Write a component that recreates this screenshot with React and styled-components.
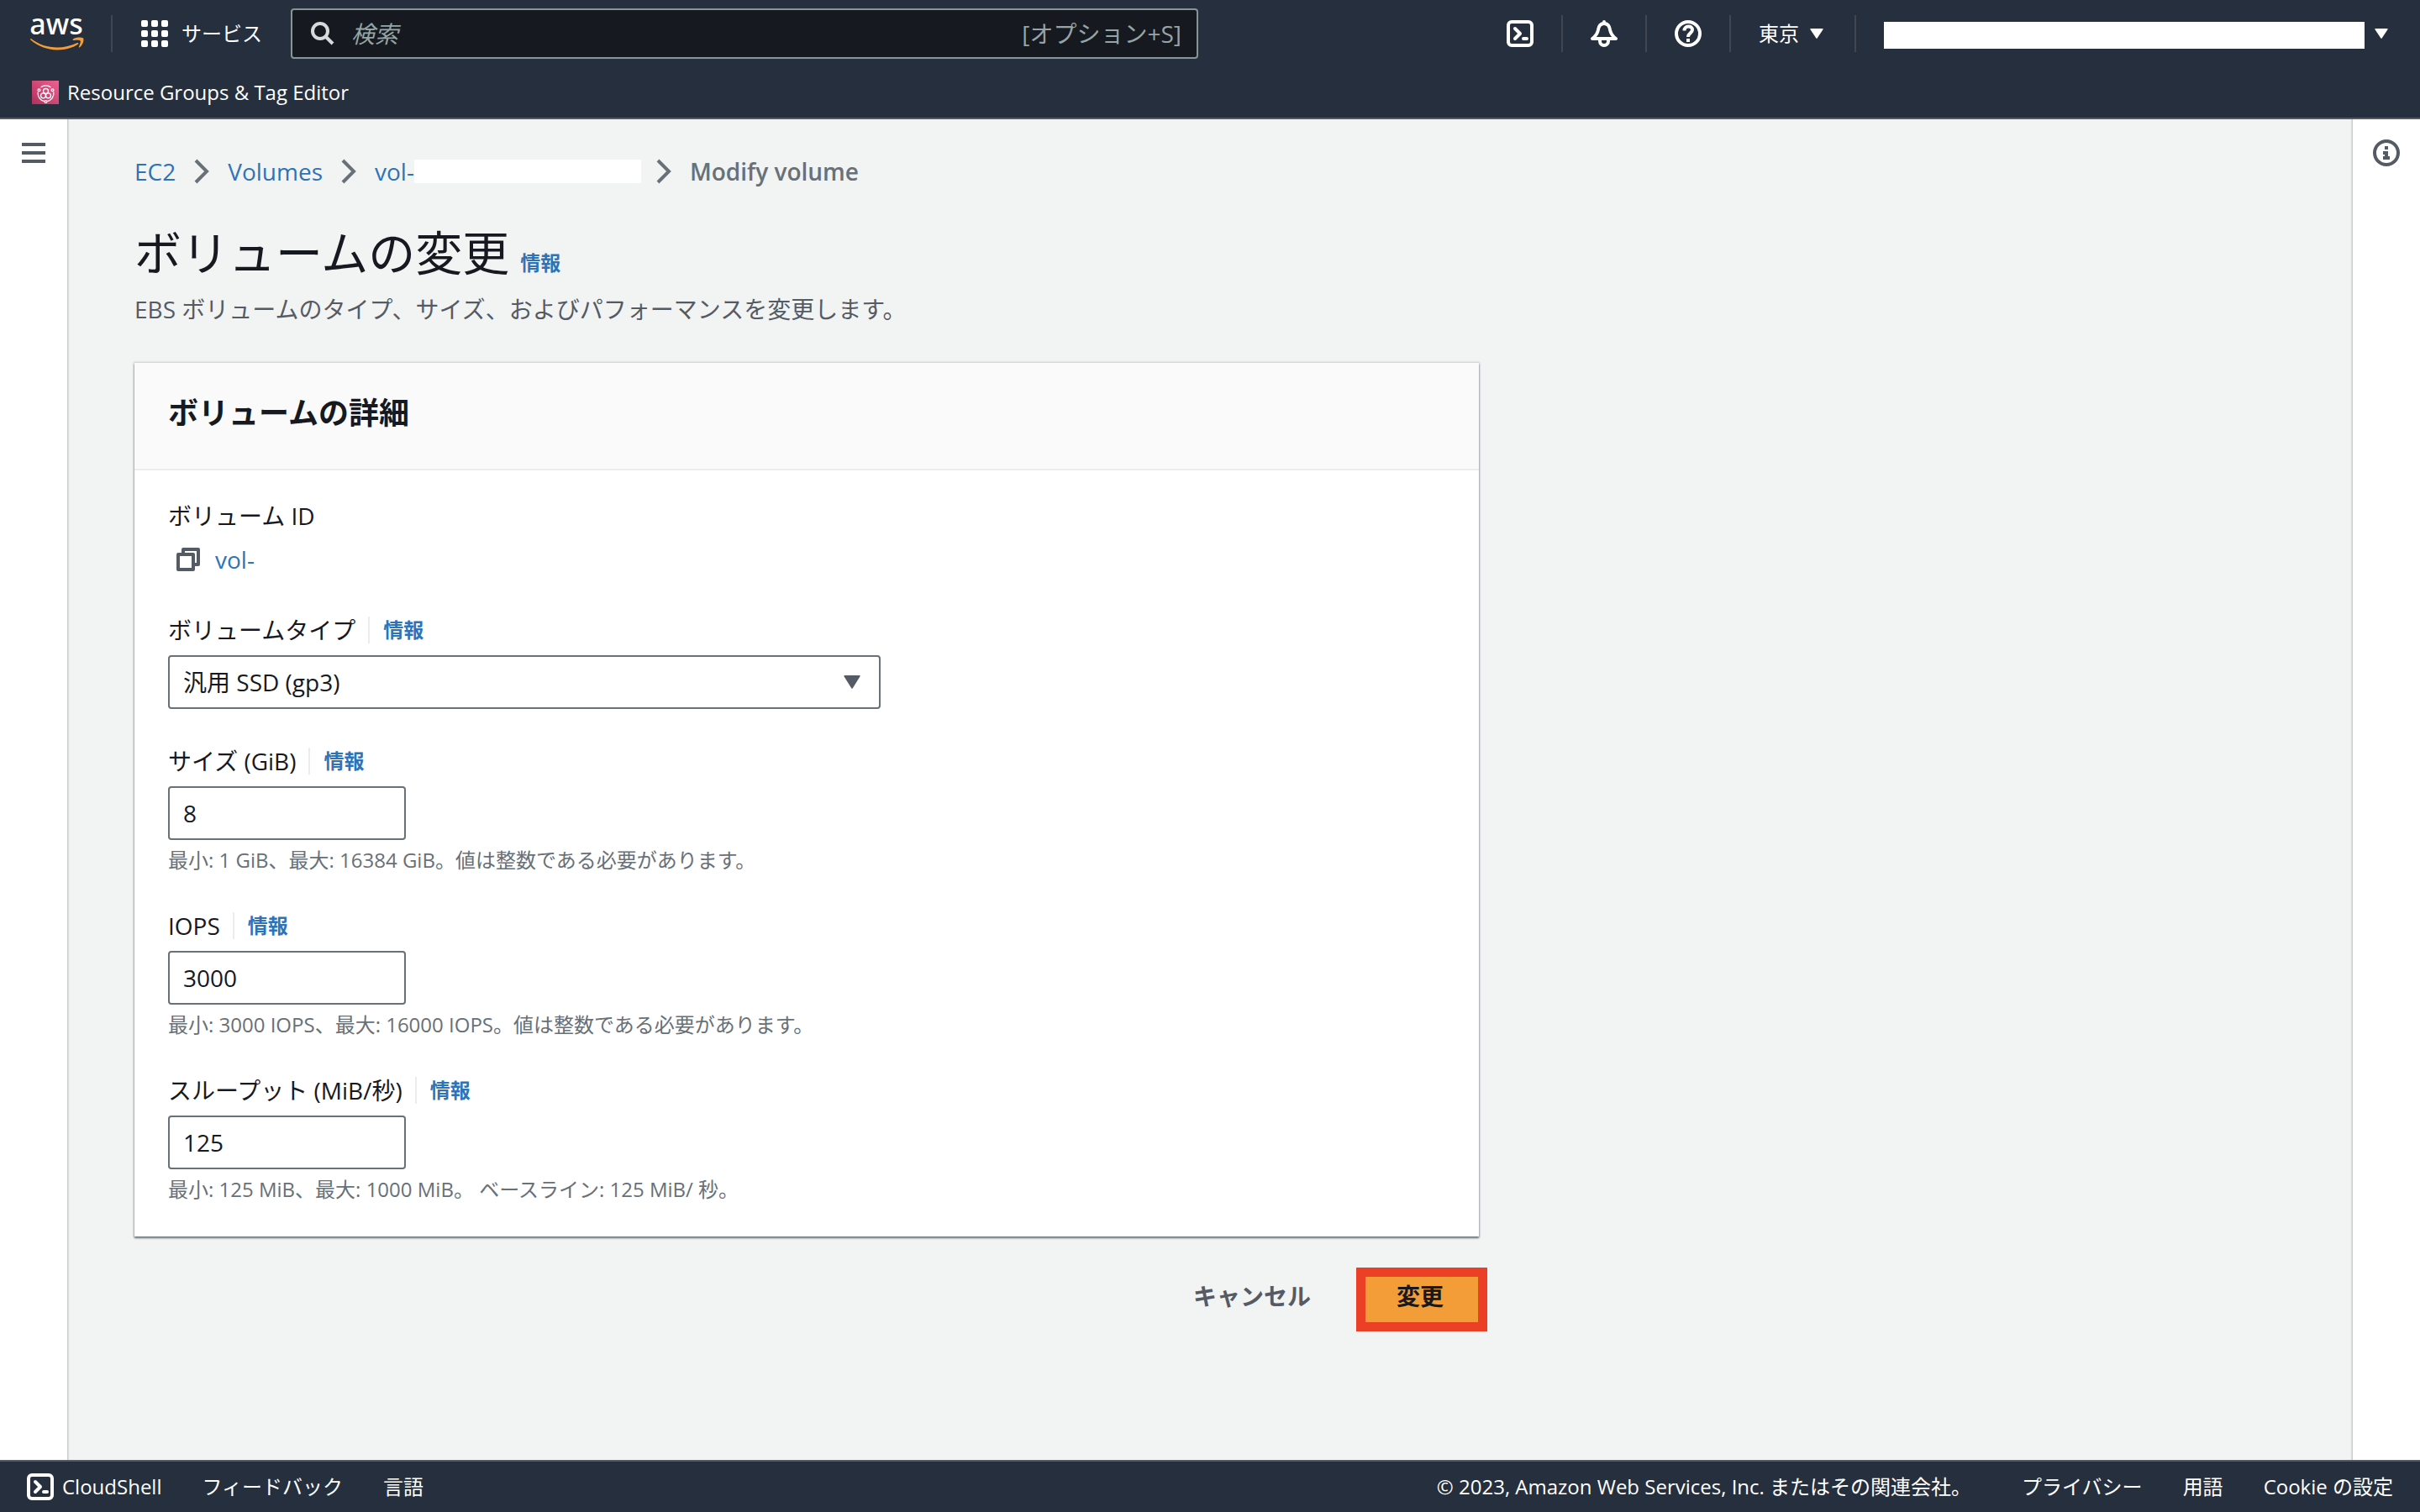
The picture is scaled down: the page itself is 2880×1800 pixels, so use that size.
import { useState } from "react";
import styled, { createGlobalStyle } from "styled-components";

const GlobalStyle = createGlobalStyle`
  * {
    box-sizing: border-box;
  }

  body {
    margin: 0;
    background: #f2f3f3;
    color: #16191f;
    font-family: "Open Sans", "Noto Sans CJK JP", sans-serif;
    font-size: 28px;
    line-height: 44px;
  }

  button,
  input,
  select {
    font: inherit;
    color: inherit;
  }
`;

const fields = [
  {
    id: "size",
    label: "サイズ (GiB)",
    value: "8",
    hint: "最小: 1 GiB、最大: 16384 GiB。値は整数である必要があります。",
  },
  {
    id: "iops",
    label: "IOPS",
    value: "3000",
    hint: "最小: 3000 IOPS、最大: 16000 IOPS。値は整数である必要があります。",
  },
  {
    id: "throughput",
    label: "スループット (MiB/秒)",
    value: "125",
    hint: "最小: 125 MiB、最大: 1000 MiB。 ベースライン: 125 MiB/ 秒。",
  },
];

const AwsLogo = () => (
  <svg width="64" height="80" viewBox="0 0 64 80" aria-hidden="true">
    <text
      x="31"
      y="41"
      fill="#fff"
      fontSize="34"
      fontFamily="Noto Sans, sans-serif"
      fontWeight="500"
      textAnchor="middle"
    >
      aws
    </text>
    <path
      d="M1 46c9 7 20 10.500 31 10.500 8 0 17-2 24-5.500 1-.5 2 .8 1 1.600C50 57.500 41 59.400 32.500 59.400 20 59.400 9 55 .5 47.500c-.8-.8-.3-2 .5-1.500z"
      fill="#f29d38"
    />
    <path
      d="M51 46.500c3-2 9-2.500 12-1.200 1.500 2.500-.5 8-4 11-.8.6-1.500.2-1.200-.6 1-2.400 2.600-6 1.800-7.200-.9-1.200-5.600-.7-8-.4-1 .1-1.400-.9-.6-1.600z"
      fill="#f29d38"
    />
  </svg>
);

const GridIcon = () => (
  <svg width="32" height="32" viewBox="0 0 32 32" fill="#fff" aria-hidden="true">
    {[0, 12, 24].map((y) =>
      [0, 12, 24].map((x) => (
        <rect key={x + "-" + y} x={x} y={y} width="8" height="8" rx="2" />
      ))
    )}
  </svg>
);

const SearchIcon = () => (
  <svg width="28" height="28" viewBox="0 0 28 28" fill="none" stroke="#d5dbdb" strokeWidth="4" aria-hidden="true">
    <circle cx="11" cy="11" r="9" />
    <path d="M17.500 17.500 26 26" />
  </svg>
);

const ShellIcon = () => (
  <svg width="32" height="32" viewBox="0 0 32 32" fill="none" stroke="#fff" strokeWidth="4" strokeLinejoin="round" strokeLinecap="round" aria-hidden="true">
    <rect x="2" y="2" width="28" height="28" rx="4" />
    <path d="m10 10 6 6-6 6M20 22h4" />
  </svg>
);

const BellIcon = () => (
  <svg width="32" height="32" viewBox="0 0 32 32" fill="none" stroke="#fff" strokeWidth="4" strokeLinejoin="round" strokeLinecap="round" aria-hidden="true">
    <path d="M2 22c4-3 6-5.500 6.800-10C9.500 7 12 4 16 4s6.500 3 7.200 8c.8 4.500 2.800 7 6.800 10z" />
    <path d="M11 23v2a5 5 0 0 0 10 0v-2M16 2v2" />
  </svg>
);

const HelpIcon = () => (
  <svg width="32" height="32" viewBox="0 0 32 32" fill="none" stroke="#fff" strokeWidth="4" aria-hidden="true">
    <circle cx="16" cy="16" r="14" />
    <path d="M11.500 12.500C11.500 6 21 6 21 11.500c0 4-5 3.800-5 8.500M16 22v4" />
  </svg>
);

const ResourceIcon = () => (
  <svg width="32" height="28" viewBox="0 0 32 28" fill="none" stroke="#fff" strokeWidth="1.300" aria-hidden="true">
    <defs>
      <linearGradient id="pink" x1="0" y1="1" x2="1" y2="0">
        <stop offset="0" stopColor="#b0305c" />
        <stop offset="1" stopColor="#f0618f" />
      </linearGradient>
    </defs>
    <rect width="32" height="28" fill="url(#pink)" stroke="none" />
    <circle cx="16.500" cy="12.500" r="3" />
    <circle cx="13.500" cy="17.800" r="3" />
    <circle cx="19.500" cy="17.800" r="3" />
    <path d="M10.500 8a9.600 9.600 0 0 1 12 0M7.200 13.500a9.600 9.600 0 0 0 7.500 11M25.800 13.500a9.600 9.600 0 0 1-7.500 11" />
    <circle cx="8.500" cy="11.300" r="1.400" />
    <circle cx="24.500" cy="11.300" r="1.400" />
    <circle cx="16.500" cy="25" r="1.400" />
  </svg>
);

const MenuIcon = () => (
  <svg width="28" height="24" viewBox="0 0 28 24" fill="#545b64" aria-hidden="true">
    <path d="M0 0h28v4H0zM0 10h28v4H0zM0 20h28v4H0z" />
  </svg>
);

const InfoIcon = () => (
  <svg width="32" height="32" viewBox="0 0 32 32" fill="none" stroke="#545b64" strokeWidth="4" aria-hidden="true">
    <circle cx="16" cy="16" r="14" />
    <path d="M14 8h4v4h-4zM12 14h6v6h2v4h-8v-4h2v-2h-2z" fill="#545b64" stroke="none" />
  </svg>
);

const CopyIcon = () => (
  <svg width="28" height="28" viewBox="0 0 28 28" fill="none" stroke="#545b64" strokeWidth="4" strokeLinejoin="round" aria-hidden="true">
    <path d="M2 8h18v18H2z" />
    <path d="M8 7V2h18v18h-5" />
  </svg>
);

const Chevron = () => (
  <svg width="18" height="30" viewBox="0 0 18 30" fill="none" stroke="#687078" strokeWidth="4" aria-hidden="true">
    <path d="m2 2 13 13L2 28" />
  </svg>
);

const Caret = ({ width = 16, height = 12, color = "#fff" }) => (
  <svg width={width} height={height} viewBox="0 0 16 12" preserveAspectRatio="none" aria-hidden="true">
    <path d="M1 0h14q1 0 .6 1L8.600 11.500q-.6.8-1.200 0L.4 1Q0 0 1 0z" fill={color} />
  </svg>
);

const Field = ({ id, label, hint, children }) => (
  <FieldBlock>
    <LabelRow>
      <label htmlFor={id}>{label}</label>
      <LabelDivider />
      <InfoLink href="#">情報</InfoLink>
    </LabelRow>
    {children}
    {hint && <Hint id={id + "-hint"}>{hint}</Hint>}
  </FieldBlock>
);

const App = () => {
  const [values, setValues] = useState(
    Object.fromEntries(fields.map((field) => [field.id, field.value]))
  );

  return (
    <Page>
      <GlobalStyle />
      <Header>
        <TopBar>
          <LogoLink href="#" aria-label="aws">
            <AwsLogo />
          </LogoLink>
          <Divider />
          <ServicesButton type="button">
            <GridIcon />
            サービス
          </ServicesButton>
          <SearchBox>
            <SearchIcon />
            <SearchInput type="search" placeholder="検索" aria-label="検索" />
            <Shortcut>[オプション+S]</Shortcut>
          </SearchBox>
          <Tools>
            <IconButton type="button" aria-label="CloudShell">
              <ShellIcon />
            </IconButton>
            <Divider />
            <IconButton type="button" aria-label="通知">
              <BellIcon />
            </IconButton>
            <Divider />
            <IconButton type="button" aria-label="ヘルプ">
              <HelpIcon />
            </IconButton>
            <Divider />
            <RegionButton type="button">
              東京
              <Caret />
            </RegionButton>
            <Divider />
            <AccountButton type="button" aria-label="アカウント">
              <AccountName />
              <Caret />
            </AccountButton>
          </Tools>
        </TopBar>
        <Favorites>
          <FavoriteLink href="#">
            <ResourceIcon />
            Resource Groups &amp; Tag Editor
          </FavoriteLink>
        </Favorites>
      </Header>

      <Body>
        <Rail>
          <IconOnly type="button" aria-label="メニュー">
            <MenuIcon />
          </IconOnly>
        </Rail>
        <Main>
          <Breadcrumbs>
            <TextLink href="#">EC2</TextLink>
            <Chevron />
            <TextLink href="#">Volumes</TextLink>
            <Chevron />
            <VolumeCrumb>
              <TextLink href="#">vol-</TextLink>
              <HiddenId />
            </VolumeCrumb>
            <Chevron />
            <CurrentCrumb>Modify volume</CurrentCrumb>
          </Breadcrumbs>
          <TitleRow>
            <Title>ボリュームの変更</Title>
            <InfoLink href="#">情報</InfoLink>
          </TitleRow>
          <Description>
            EBS ボリュームのタイプ、サイズ、およびパフォーマンスを変更します。
          </Description>

          <Card>
            <CardHeader>
              <CardTitle>ボリュームの詳細</CardTitle>
            </CardHeader>
            <Form>
              <FieldBlock>
                <div>ボリューム ID</div>
                <VolumeId>
                  <IconOnly type="button" aria-label="コピー">
                    <CopyIcon />
                  </IconOnly>
                  <TextLink href="#">vol-</TextLink>
                </VolumeId>
              </FieldBlock>
              <Field id="type" label="ボリュームタイプ">
                <SelectWrap>
                  <Select id="type">
                    <option>汎用 SSD (gp3)</option>
                  </Select>
                  <SelectCaret>
                    <Caret width={20} height={16} color="#545b64" />
                  </SelectCaret>
                </SelectWrap>
              </Field>
              {fields.map((field) => (
                <Field key={field.id} {...field}>
                  <Input
                    id={field.id}
                    aria-describedby={field.id + "-hint"}
                    value={values[field.id]}
                    onChange={(e) =>
                      setValues({ ...values, [field.id]: e.target.value })
                    }
                  />
                </Field>
              ))}
            </Form>
          </Card>

          <Actions>
            <Button type="button">キャンセル</Button>
            <PrimaryButton type="button">変更</PrimaryButton>
          </Actions>
        </Main>
        <Rail>
          <IconOnly type="button" aria-label="情報">
            <InfoIcon />
          </IconOnly>
        </Rail>
      </Body>

      <Footer>
        <FooterGroup>
          <ShellLink href="#">
            <ShellIcon />
            CloudShell
          </ShellLink>
          <FooterLink href="#">フィードバック</FooterLink>
          <FooterLink href="#">言語</FooterLink>
        </FooterGroup>
        <FooterGroup>
          <Copyright>
            © 2023, Amazon Web Services, Inc. またはその関連会社。
          </Copyright>
          <FooterLink href="#">プライバシー</FooterLink>
          <FooterLink href="#">用語</FooterLink>
          <FooterLink href="#">Cookie の設定</FooterLink>
        </FooterGroup>
      </Footer>
    </Page>
  );
};

export default App;

const Page = styled.div`
  min-height: 100vh;
  display: flex;
  flex-direction: column;

  svg {
    display: block;
    flex: none;
  }
`;

const Header = styled.header`
  background: #252f3e;
  color: #fff;
  border-bottom: 2px solid #545b64;
  font-size: 24px;
  line-height: 36px;
`;

const TopBar = styled.div`
  display: flex;
  align-items: center;
  height: 80px;
  padding: 0 38px 0 36px;
`;

const LogoLink = styled.a`
  margin-right: 32px;
`;

const Divider = styled.span`
  flex: none;
  width: 2px;
  height: 44px;
  background: #414750;
`;

const PlainButton = styled.button`
  display: flex;
  align-items: center;
  padding: 0;
  border: 0;
  background: none;
  cursor: pointer;
`;

const ServicesButton = styled(PlainButton)`
  gap: 16px;
  margin: 0 34px;
`;

const SearchBox = styled.div`
  display: flex;
  align-items: center;
  flex: 0 1 1080px;
  height: 60px;
  padding: 0 18px 0 22px;
  border: 2px solid #879596;
  border-radius: 4px;
  background: #16191f;
  color: #95a5a6;
  font-size: 28px;
`;

const SearchInput = styled.input`
  flex: 1;
  min-width: 0;
  margin-left: 20px;
  padding: 0;
  border: 0;
  outline: 0;
  background: none;
  color: #fff;

  &::placeholder {
    color: #95a5a6;
    font-style: italic;
  }
`;

const Shortcut = styled.span`
  white-space: nowrap;
`;

const Tools = styled.div`
  display: flex;
  align-items: center;
  margin-left: auto;
`;

const IconButton = styled(PlainButton)`
  margin: 0 33px;
`;

const RegionButton = styled(PlainButton)`
  gap: 13px;
  margin: 0 37px 0 33px;
`;

const AccountButton = styled(PlainButton)`
  gap: 12px;
  margin-left: 33px;
`;

const AccountName = styled.span`
  width: 572px;
  height: 32px;
  margin-top: 4px;
  background: #fff;
`;

const Favorites = styled.nav`
  display: flex;
  align-items: center;
  height: 60px;
  padding: 0 38px;
`;

const FavoriteLink = styled.a`
  display: flex;
  align-items: center;
  gap: 10px;
  color: #fff;
  text-decoration: none;
`;

const Body = styled.div`
  display: flex;
  flex: 1;
`;

const Rail = styled.aside`
  display: flex;
  flex: none;
  justify-content: center;
  align-items: flex-start;
  width: 80px;
  padding-top: 24px;
  background: #fff;
  box-shadow: 0 0 2px 1px #b4bbbc;
  clip-path: inset(0 -4px);
`;

const IconOnly = styled(PlainButton)`
  justify-content: center;
  height: 32px;
`;

const Main = styled.main`
  flex: 1;
  min-width: 0;
  padding: 40px 80px;
`;

const Breadcrumbs = styled.nav`
  display: flex;
  align-items: center;
  gap: 22px;
`;

const TextLink = styled.a`
  color: #2e73b8;
  text-decoration: none;
`;

const VolumeCrumb = styled.span`
  display: flex;
  align-items: center;
  margin-right: -4px;
`;

const HiddenId = styled.span`
  width: 270px;
  height: 28px;
  background: #fff;
`;

const CurrentCrumb = styled.span`
  color: #687078;
  font-weight: 600;
`;

const TitleRow = styled.div`
  display: flex;
  align-items: baseline;
  gap: 13px;
  margin-top: 38px;
`;

const Title = styled.h1`
  margin: 0;
  font-size: 56px;
  font-weight: 400;
  line-height: 72px;
`;

const InfoLink = styled.a`
  color: #2e73b8;
  font-size: 24px;
  font-weight: 700;
  line-height: 36px;
  text-decoration: none;
`;

const Description = styled.p`
  margin: 10px 0 0;
  color: #545b64;
`;

const Card = styled.section`
  max-width: 1600px;
  margin-top: 42px;
  background: #fff;
  box-shadow: 0 2px 2px 0 #6b7478, 0 0 2px 1px #c8cdce;
`;

const CardHeader = styled.div`
  padding: 38px 40px 44px;
  border-bottom: 2px solid #eaeded;
  background: #fafafa;
`;

const CardTitle = styled.h2`
  margin: 0;
  font-size: 36px;
  font-weight: 700;
  line-height: 44px;
`;

const Form = styled.form`
  display: flex;
  flex-direction: column;
  gap: 40px;
  padding: 32px 40px 40px;
`;

const FieldBlock = styled.div`
  display: flex;
  flex-direction: column;
`;

const LabelRow = styled.div`
  display: flex;
  align-items: center;
  margin-bottom: 8px;
`;

const LabelDivider = styled.span`
  width: 2px;
  height: 32px;
  margin: 0 16px 0 15px;
  background: #eaeded;
`;

const VolumeId = styled.div`
  display: flex;
  align-items: center;
  gap: 18px;
  margin-top: 8px;
  padding-left: 10px;
`;

const SelectWrap = styled.div`
  position: relative;
  max-width: 848px;
`;

const Select = styled.select`
  width: 100%;
  height: 64px;
  padding: 0 60px 0 16px;
  border: 2px solid #687078;
  border-radius: 4px;
  background: #fff;
  appearance: none;
`;

const SelectCaret = styled.span`
  position: absolute;
  top: 24px;
  right: 24px;
  pointer-events: none;
`;

const Input = styled.input`
  width: 283px;
  height: 64px;
  padding: 0 16px;
  border: 2px solid #687078;
  border-radius: 4px;
  background: #fff;
`;

const Hint = styled.div`
  margin-top: 8px;
  color: #687078;
  font-size: 24px;
  line-height: 32px;
`;

const Actions = styled.div`
  display: flex;
  justify-content: flex-end;
  gap: 18px;
  max-width: 1600px;
  margin-top: 40px;
`;

const Button = styled.button`
  position: relative;
  height: 64px;
  padding: 0 40px 2px;
  border: 2px solid transparent;
  border-radius: 4px;
  background: none;
  color: #545b64;
  font-weight: 700;
  cursor: pointer;
`;

const PrimaryButton = styled(Button)`
  background: #f29d38;
  color: #16191f;

  /* attention frame around the submit button */
  &::after {
    content: "";
    position: absolute;
    inset: -5px -12px -11px -8px;
    border: 11px solid #eb4025;
  }
`;

const Footer = styled.footer`
  display: flex;
  justify-content: space-between;
  align-items: center;
  height: 62px;
  padding: 0 32px;
  border-top: 2px solid #545b64;
  background: #252f3e;
  color: #fff;
  font-size: 24px;
  line-height: 36px;
`;

const FooterGroup = styled.div`
  display: flex;
  align-items: center;
  gap: 48px;
`;

const FooterLink = styled.a`
  color: #fff;
  text-decoration: none;
`;

const ShellLink = styled(FooterLink)`
  display: flex;
  align-items: center;
  gap: 10px;
`;

const Copyright = styled.span`
  margin-right: 12px;
`;
